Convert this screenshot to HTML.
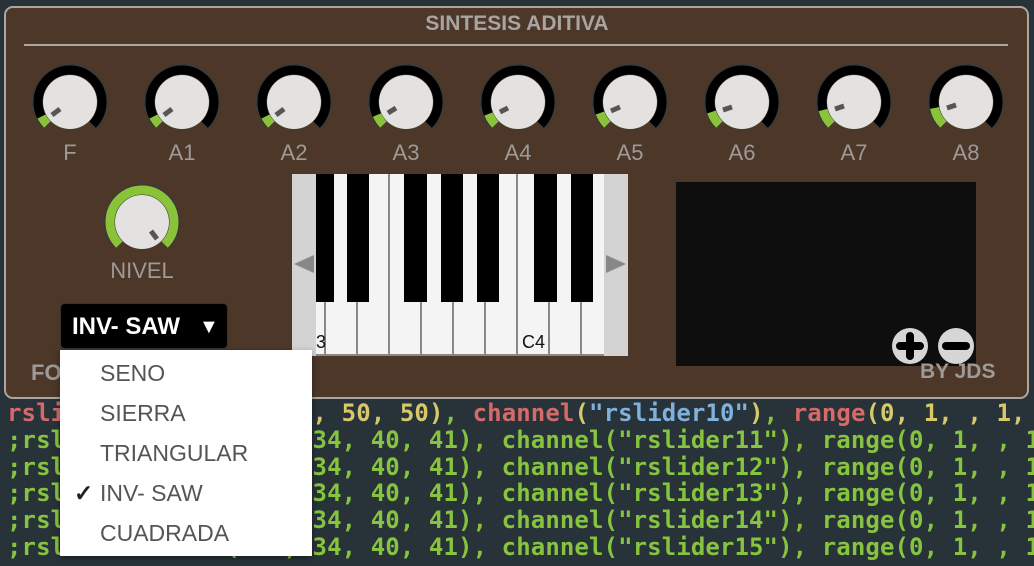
<!DOCTYPE html>
<html><head><meta charset="utf-8"><style>
*{margin:0;padding:0;box-sizing:border-box}
body{width:1034px;height:566px;overflow:hidden;background:#273239;position:relative;font-family:"Liberation Sans",sans-serif}
.code{position:absolute;left:7px;font-family:"DejaVu Sans Mono","Liberation Mono",monospace;font-weight:bold;font-size:24px;line-height:27px;white-space:pre;color:#86c33f;letter-spacing:0.1px}
.r{color:#d46a6a}.y{color:#d7c86a}.b{color:#80b0dc}
#panel{position:absolute;left:4px;top:6px;width:1025px;height:393px;background:#4d3729;border:2px solid #a9a6a3;border-radius:9px}
.lbl{position:absolute;color:#9d9a97;font-size:22px;text-align:center}
.title{position:absolute;left:0;width:1034px;top:12px;text-align:center;color:#a8a4a0;font-weight:bold;font-size:21px}
.menu{position:absolute;left:60px;top:350px;width:252px;height:206px;background:#fff;box-shadow:0 2px 6px rgba(0,0,0,.4)}
.menu div{position:absolute;left:40px;font-size:23px;color:#555}
</style></head><body>
<div class="code" style="top:400px"><span class="r">rslider bounds</span><span class="y">(70,  8, 50, 50)</span>, <span class="r">channel</span><span class="y">(</span><span class="b">"rslider10"</span><span class="y">)</span>, <span class="r">range</span><span class="y">(0, 1, , 1,</span></div>
<div class="code" style="top:427px">;rslider bounds(620, 34, 40, 41), channel("rslider11"), range(0, 1, , 1</div>
<div class="code" style="top:454px">;rslider bounds(620, 34, 40, 41), channel("rslider12"), range(0, 1, , 1</div>
<div class="code" style="top:480px">;rslider bounds(620, 34, 40, 41), channel("rslider13"), range(0, 1, , 1</div>
<div class="code" style="top:507px">;rslider bounds(620, 34, 40, 41), channel("rslider14"), range(0, 1, , 1</div>
<div class="code" style="top:534px">;rslider bounds(620, 34, 40, 41), channel("rslider15"), range(0, 1, , 1</div>

<div id="panel"></div>
<div class="title">SINTESIS ADITIVA</div>
<div style="position:absolute;left:24px;top:44px;width:984px;height:2px;background:#a9a6a3"></div>

<svg width="1034" height="566" style="position:absolute;left:0;top:0">
<defs>
<g id="ring"><path d="M-22.6 22.6 A32 32 0 1 1 22.6 22.6" fill="none" stroke="#3a3a3a" stroke-width="12"/><path d="M-22.6 22.6 A32 32 0 1 1 22.6 22.6" fill="none" stroke="#000" stroke-width="9"/><circle r="27" fill="#e3e2e0"/></g>
</defs>
<g transform="translate(70,102)"><use href="#ring"/><path d="M-22.6 22.6 A32 32 0 0 1 -28.5 14.5" fill="none" stroke="#8ac33a" stroke-width="9"/><line x1="-10" y1="7" x2="-18" y2="13" stroke="#555" stroke-width="5"/></g>
<g transform="translate(182,102)"><use href="#ring"/><path d="M-22.6 22.6 A32 32 0 0 1 -28.5 14.5" fill="none" stroke="#8ac33a" stroke-width="9"/><line x1="-10" y1="7" x2="-18" y2="13" stroke="#555" stroke-width="5"/></g>
<g transform="translate(294,102)"><use href="#ring"/><path d="M-22.6 22.6 A32 32 0 0 1 -28.5 14.5" fill="none" stroke="#8ac33a" stroke-width="9"/><line x1="-10" y1="7" x2="-18" y2="13" stroke="#555" stroke-width="5"/></g>
<g transform="translate(406,102)"><use href="#ring"/><path d="M-22.6 22.6 A32 32 0 0 1 -29 13" fill="none" stroke="#8ac33a" stroke-width="9"/><line x1="-10" y1="6" x2="-18" y2="11" stroke="#555" stroke-width="5"/></g>
<g transform="translate(518,102)"><use href="#ring"/><path d="M-22.6 22.6 A32 32 0 0 1 -29.5 12" fill="none" stroke="#8ac33a" stroke-width="9"/><line x1="-10" y1="6" x2="-18" y2="10" stroke="#555" stroke-width="5"/></g>
<g transform="translate(630,102)"><use href="#ring"/><path d="M-22.6 22.6 A32 32 0 0 1 -30 11" fill="none" stroke="#8ac33a" stroke-width="9"/><line x1="-10" y1="5" x2="-19" y2="9" stroke="#555" stroke-width="5"/></g>
<g transform="translate(742,102)"><use href="#ring"/><path d="M-22.6 22.6 A32 32 0 0 1 -30.5 10" fill="none" stroke="#8ac33a" stroke-width="9"/><line x1="-10" y1="5" x2="-19" y2="8" stroke="#555" stroke-width="5"/></g>
<g transform="translate(854,102)"><use href="#ring"/><path d="M-22.6 22.6 A32 32 0 0 1 -31 8" fill="none" stroke="#8ac33a" stroke-width="9"/><line x1="-10" y1="4" x2="-19" y2="7" stroke="#555" stroke-width="5"/></g>
<g transform="translate(966,102)"><use href="#ring"/><path d="M-22.6 22.6 A32 32 0 0 1 -31.5 6" fill="none" stroke="#8ac33a" stroke-width="9"/><line x1="-10" y1="3" x2="-19" y2="6" stroke="#555" stroke-width="5"/></g>
<g transform="translate(142,222)"><path d="M-22.6 22.6 A32 32 0 1 1 22.6 22.6" fill="none" stroke="#3a3a3a" stroke-width="12"/><path d="M-22.6 22.6 A32 32 0 1 1 22.6 22.6" fill="none" stroke="#8ac33a" stroke-width="9"/><circle r="27" fill="#e3e2e0"/><line x1="9" y1="9" x2="15" y2="17" stroke="#555" stroke-width="5"/></g>

<rect x="292" y="174" width="336" height="182" fill="#f4f4f4"/>
<g stroke="#888" stroke-width="2">
<line x1="325" y1="174" x2="325" y2="356"/><line x1="357" y1="174" x2="357" y2="356"/><line x1="389" y1="174" x2="389" y2="356"/><line x1="421" y1="174" x2="421" y2="356"/><line x1="453" y1="174" x2="453" y2="356"/><line x1="485" y1="174" x2="485" y2="356"/><line x1="517" y1="174" x2="517" y2="356"/><line x1="549" y1="174" x2="549" y2="356"/><line x1="581" y1="174" x2="581" y2="356"/>
</g>
<g fill="#000">
<rect x="316" y="174" width="18" height="128"/><rect x="347" y="174" width="22" height="128"/><rect x="404" y="174" width="23" height="128"/><rect x="441" y="174" width="22" height="128"/><rect x="477" y="174" width="22" height="128"/><rect x="534" y="174" width="23" height="128"/><rect x="571" y="174" width="22" height="128"/>
</g>
<line x1="292" y1="355" x2="628" y2="355" stroke="#888" stroke-width="2"/>
<rect x="292" y="174" width="24" height="182" fill="#d3d3d3"/>
<rect x="604" y="174" width="24" height="182" fill="#d3d3d3"/>
<polygon points="294,264 314,255 314,273" fill="#888"/>
<polygon points="626,264 606,255 606,273" fill="#888"/>
<text x="316" y="348" font-family="Liberation Sans" font-size="18" fill="#111">3</text>
<text x="522" y="348" font-family="Liberation Sans" font-size="18" fill="#111">C4</text>

<rect x="676" y="182" width="300" height="184" fill="#0e0e0e"/>
<circle cx="910" cy="346" r="18" fill="#d6d6d6"/>
<path d="M900 346 H920 M910 336 V356" stroke="#000" stroke-width="8" stroke-linecap="round"/>
<circle cx="956" cy="346" r="18" fill="#d6d6d6"/>
<path d="M946 346 H966" stroke="#000" stroke-width="8" stroke-linecap="round"/>
</svg>

<div class="lbl" style="left:40px;top:140px;width:60px">F</div>
<div class="lbl" style="left:152px;top:140px;width:60px">A1</div>
<div class="lbl" style="left:264px;top:140px;width:60px">A2</div>
<div class="lbl" style="left:376px;top:140px;width:60px">A3</div>
<div class="lbl" style="left:488px;top:140px;width:60px">A4</div>
<div class="lbl" style="left:600px;top:140px;width:60px">A5</div>
<div class="lbl" style="left:712px;top:140px;width:60px">A6</div>
<div class="lbl" style="left:824px;top:140px;width:60px">A7</div>
<div class="lbl" style="left:936px;top:140px;width:60px">A8</div>
<div class="lbl" style="left:102px;top:258px;width:80px">NIVEL</div>
<div class="lbl" style="left:31px;top:360px;font-weight:bold">FO</div>
<div class="lbl" style="left:920px;top:360px;font-weight:bold;font-size:21px">BY JDS</div>

<div style="position:absolute;left:60px;top:303px;width:168px;height:46px;background:#000;border:1px solid #333;border-radius:5px;color:#fff;font-weight:bold;font-size:24px;line-height:46px;padding-left:11px">INV- SAW<span style="position:absolute;left:138px;font-size:20px">▼</span></div>

<div class="menu">
<div style="top:10px">SENO</div>
<div style="top:50px">SIERRA</div>
<div style="top:90px">TRIANGULAR</div>
<div style="top:130px">INV- SAW</div>
<div style="top:130px;left:14px;color:#222;font-weight:bold">✓</div>
<div style="top:170px">CUADRADA</div>
</div>
</body></html>
